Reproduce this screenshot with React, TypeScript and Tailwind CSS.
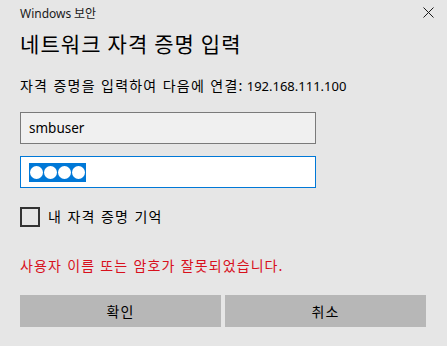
const font = "font-['Noto_Sans_CJK_KR','Noto_Sans',sans-serif]";
const latin = "font-['Noto_Sans','Noto_Sans_CJK_KR',sans-serif]";

function CloseIcon() {
  return (
    <svg width="11" height="11" viewBox="0 0 11 11" className="text-[#1a1a1a]">
      <path d="M0.5 0.5L10.5 10.5M10.5 0.5L0.5 10.5" stroke="currentColor" strokeWidth="1" fill="none" />
    </svg>
  );
}

function Dot() {
  return <span className="w-[13px] h-[13px] rounded-full bg-white" />;
}

export default function App() {
  return (
    <div className={`w-[447px] h-[346px] bg-[#e6e6e6] text-black ${font} overflow-hidden`}>
      <div className="px-5 pt-[3px]">
        <div className="flex items-center justify-between h-[20px]">
          <span className="text-[12px] text-[#1a1a1a]">
            <span className={latin}>Windows</span> 보안
          </span>
          <span className="mr-[-7px] mt-[-2px]">
            <CloseIcon />
          </span>
        </div>
        <h1 className="mt-[5px] text-[21px] leading-[30px] font-normal tracking-[1.1px]">네트워크 자격 증명 입력</h1>
        <p className="mt-[17px] text-[14px] leading-[20px]">
          <span className="tracking-[1.2px] [word-spacing:1px]">자격 증명을 입력하여 다음에 연결:</span>{" "}
          <span className={`${latin} text-[13px]`}>192.168.111.100</span>
        </p>

        <div className="mt-[16px] w-[296px] flex flex-col gap-[12px]">
          <div className={`h-[32px] border border-[#7a7a7a] bg-[#f0f0f0] flex items-center px-[8px] text-[13.5px] ${latin}`}>
            smbuser
          </div>
          <div className="h-[32px] border border-[#0078d7] bg-white flex items-center px-[8px]">
            <span className="bg-[#0078d7] h-[19px] flex items-center gap-[1px] px-[1px]">
              <Dot />
              <Dot />
              <Dot />
              <Dot />
            </span>
          </div>
        </div>

        <label className="mt-[18px] flex items-center gap-[8px]">
          <span className="w-[20px] h-[20px] border-2 border-[#333333]" />
          <span className="text-[14px] tracking-[1.2px] [word-spacing:1px]">내 자격 증명 기억</span>
        </label>

        <p className="mt-[28px] text-[14px] leading-[20px] text-[#d8101c] tracking-[1.1px] [word-spacing:1px]">
          사용자 이름 또는 암호가 잘못되었습니다.
        </p>

        <div className="mt-[20px] grid grid-cols-2 gap-[4px] w-[406px]">
          <button className="h-[32px] bg-[#b7b7b7] text-[14px] tracking-[1px]">확인</button>
          <button className="h-[32px] bg-[#b7b7b7] text-[14px] tracking-[1px]">취소</button>
        </div>
      </div>
    </div>
  );
}
